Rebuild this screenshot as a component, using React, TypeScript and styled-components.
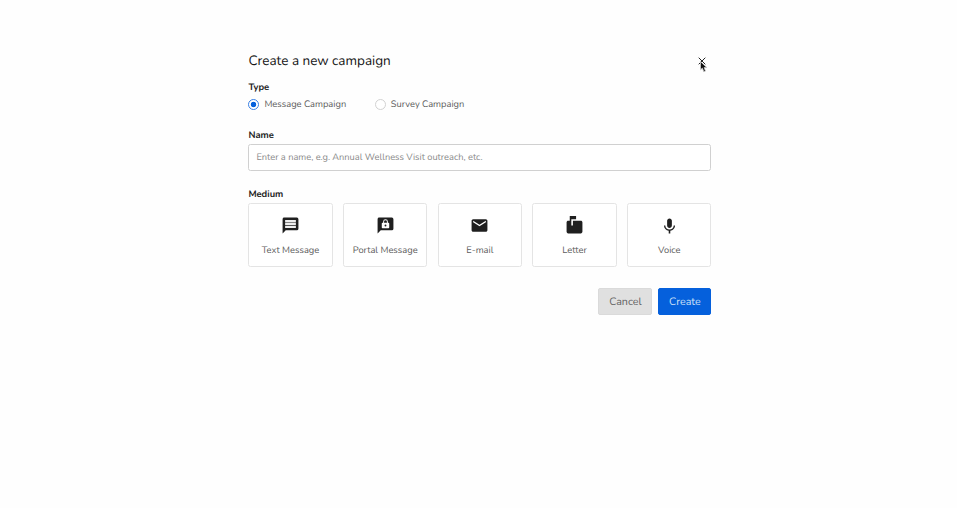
import React, { useState } from "react";
import styled, { createGlobalStyle } from "styled-components";
import { MdEmail, MdKeyboardVoice, MdMarkunreadMailbox } from "react-icons/md";

const GlobalStyle = createGlobalStyle`
  * { box-sizing: border-box; }
  body { margin: 0; background: #fefefe; font-family: Nunito, Lato, sans-serif; color: #222; text-rendering: geometricPrecision; }
  button, input { font-family: inherit; text-rendering: inherit; }
`;

const Page = styled.main`
  display: flex;
  justify-content: center;
  padding: 50px 0 0 2.8px;
  min-height: 508px;
`;

const Dialog = styled.form`
  width: 463px;
  display: flex;
  flex-direction: column;
`;

const Header = styled.header`
  display: flex;
  align-items: center;
  justify-content: space-between;
  height: 22px;
  padding-right: 5.6px;
`;

const Title = styled.h1`
  margin: 0;
  font-size: 13.5px;
  font-weight: 400;
  line-height: 22px;
  color: #161616;
`;

const CloseButton = styled.button`
  position: relative;
  display: flex;
  width: 8px;
  height: 8px;
  padding: 0;
  border: 0;
  background: none;
`;

const Pointer = styled.svg`
  position: absolute;
  left: 2px;
  top: 4px;
`;

const Label = styled.div<{ $top: number }>`
  margin-top: ${(p) => p.$top}px;
  height: 14px;
  font-size: 9.4px;
  font-weight: 700;
  line-height: 16px;
  color: #222;
`;

const Radios = styled.div`
  display: flex;
  gap: 28.6px;
  margin-top: 3px;
  height: 14px;
`;

const RadioLabel = styled.label`
  display: flex;
  align-items: center;
  gap: 5px;
  font-size: 9.3px;
  line-height: 14px;
  color: #5c5c5c;
`;

const RadioText = styled.span`
  padding-top: 2px;
`;

const Radio = styled.input`
  appearance: none;
  width: 11px;
  height: 11px;
  margin: 0;
  border: 1px solid #d2d2d2;
  border-radius: 50%;
  background: #fff;
  &:checked {
    border-color: #3a80e4;
    background: radial-gradient(circle, #0560dc 2.4px, #fff 3.1px);
  }
`;

const NameInput = styled.input`
  width: 100%;
  height: 27px;
  margin-top: 2px;
  padding: 1px 7px 0;
  border: 1px solid #d0d0d0;
  border-radius: 2.5px;
  background: #fff;
  font-size: 9.25px;
  outline: none;
  &::placeholder { color: #8a8a8a; opacity: 1; }
`;

const Mediums = styled.div`
  display: grid;
  grid-template-columns: repeat(5, 1fr);
  gap: 10.5px;
  margin-top: 2px;
`;

const MediumCard = styled.button`
  display: flex;
  flex-direction: column;
  align-items: center;
  height: 64px;
  padding: 12px 0 0;
  border: 1px solid #e4e4e4;
  border-radius: 2.5px;
  background: #fff;
  color: #1f1f1f;
`;

const MediumName = styled.span`
  margin-top: 9px;
  font-size: 9.3px;
  line-height: 14px;
  white-space: nowrap;
  color: #5c5c5c;
`;

const Actions = styled.footer`
  display: flex;
  justify-content: flex-end;
  gap: 6px;
  margin-top: 21px;
`;

const ActionButton = styled.button<{ $primary?: boolean }>`
  width: ${(p) => (p.$primary ? 53 : 54)}px;
  height: 27px;
  padding: 0 0 1px;
  border: 1px solid ${(p) => (p.$primary ? "#0560dc" : "#dadada")};
  border-radius: 2px;
  background: ${(p) => (p.$primary ? "#0560dc" : "#e0e0e0")};
  color: ${(p) => (p.$primary ? "#cfe0f8" : "#606060")};
  font-size: 10.7px;
`;

const BUBBLE = "M4 2h16a2 2 0 0 1 2 2v12a2 2 0 0 1-2 2H6l-4 4V4c0-1.1.9-2 2-2z";

const TextIcon = ({ size }: { size: number }) => (
  <svg width={size} height={size} viewBox="0 0 24 24" fill="currentColor">
    <path d={BUBBLE} />
    <path fill="#eee" d="M5.2 5h13.6v2.9H5.2zM5.2 8.6h13.6v2.9H5.2zM5.2 12.2h13.6v2.9H5.2z" />
  </svg>
);

const PortalIcon = ({ size }: { size: number }) => (
  <svg width={size} height={size} viewBox="0 0 24 24" fill="currentColor">
    <path d={BUBBLE} />
    <path
      fill="#fff"
      fillRule="evenodd"
      d="M8.2 8.5H9V7.2a3 3 0 0 1 6 0v1.3h.8c.5 0 .9.4.9.9v5.2c0 .5-.4.9-.9.9H8.2a.9.9 0 0 1-.9-.9V9.4c0-.5.4-.9.9-.9zm2 0h3.6V7.2a1.8 1.8 0 0 0-3.6 0zM12 10.8a1.2 1.2 0 1 0 0 2.4 1.2 1.2 0 0 0 0-2.4z"
    />
  </svg>
);

const mediums = [
  { name: "Text Message", Icon: TextIcon },
  { name: "Portal Message", Icon: PortalIcon },
  { name: "E-mail", Icon: MdEmail },
  { name: "Letter", Icon: MdMarkunreadMailbox },
  { name: "Voice", Icon: MdKeyboardVoice },
];

export default function App() {
  const [type, setType] = useState("Message Campaign");
  return (
    <>
      <GlobalStyle />
      <Page>
        <Dialog onSubmit={(e) => e.preventDefault()}>
          <Header>
            <Title>Create a new campaign</Title>
            <CloseButton type="button" aria-label="Close">
              <svg width="8" height="8" viewBox="0 0 8 8" stroke="#222" strokeWidth="1">
                <path d="M.7.7l6.6 6.6M7.3.7L.7 7.3" />
              </svg>
              <Pointer width="8" height="12" viewBox="0 0 8 12">
                <path d="M.5.5v8.3l1.9-1.7 1.4 3.6 1.7-.7L4.1 6.6h2.7z" fill="#111" stroke="#ccc" strokeWidth=".8" />
              </Pointer>
            </CloseButton>
          </Header>
          <Label $top={8}>Type</Label>
          <Radios>
            {["Message Campaign", "Survey Campaign"].map((name) => (
              <RadioLabel key={name}>
                <Radio type="radio" name="type" checked={type === name} onChange={() => setType(name)} />
                <RadioText>{name}</RadioText>
              </RadioLabel>
            ))}
          </Radios>
          <Label $top={17}>Name</Label>
          <NameInput placeholder="Enter a name, e.g. Annual Wellness Visit outreach, etc." />
          <Label $top={16}>Medium</Label>
          <Mediums>
            {mediums.map(({ name, Icon }) => (
              <MediumCard key={name} type="button">
                <Icon size={19} />
                <MediumName>{name}</MediumName>
              </MediumCard>
            ))}
          </Mediums>
          <Actions>
            <ActionButton type="button">Cancel</ActionButton>
            <ActionButton type="submit" $primary>Create</ActionButton>
          </Actions>
        </Dialog>
      </Page>
    </>
  );
}
